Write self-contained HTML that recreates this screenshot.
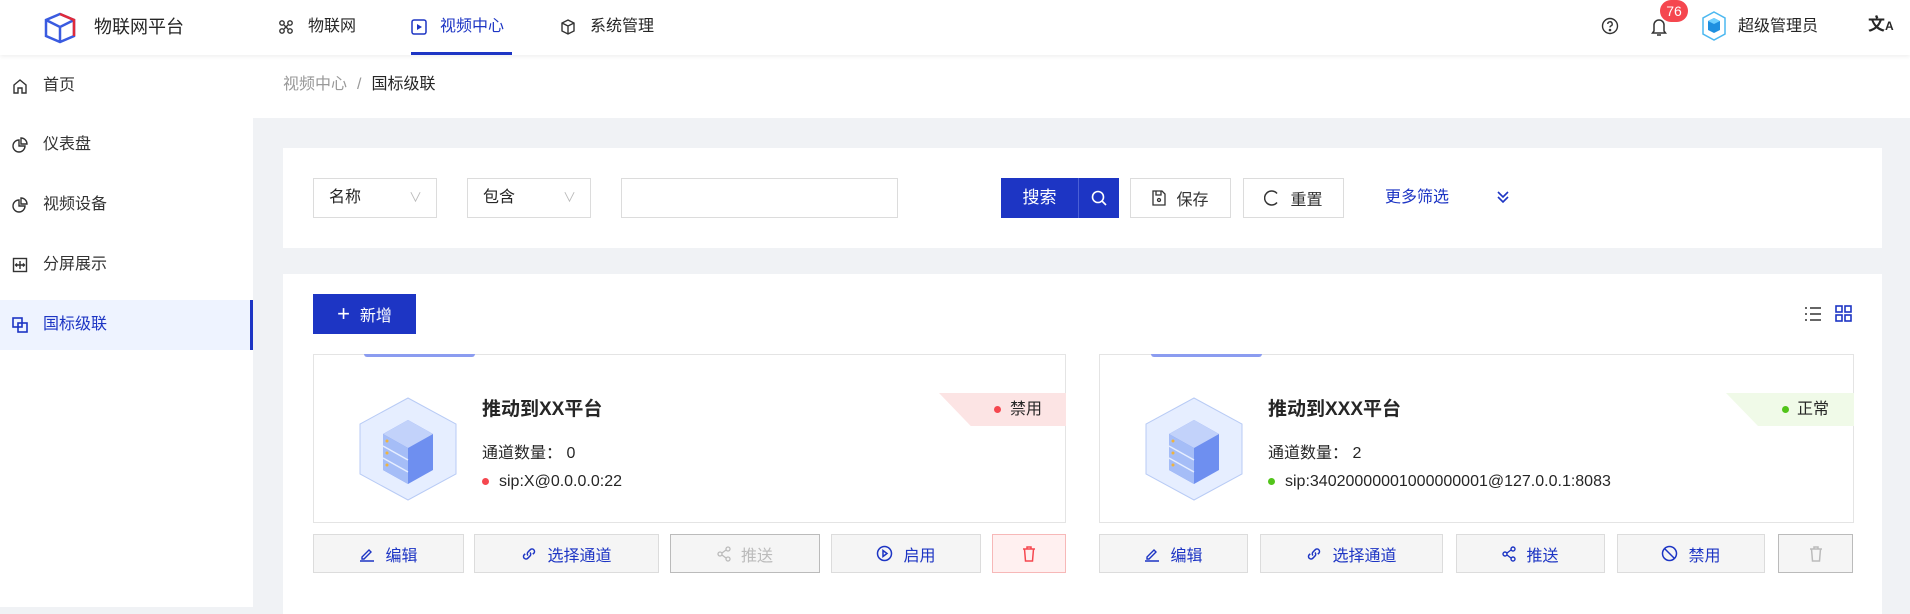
<!DOCTYPE html>
<html><head><meta charset="utf-8"><style>
*{box-sizing:border-box;margin:0;padding:0}
body{width:1910px;height:607px;overflow:hidden;background:#f0f2f5;font-family:"Liberation Sans","Noto Sans CJK SC",sans-serif;color:#262626;font-size:16px;position:relative}
.a{position:absolute}
.hdr{left:0;top:0;width:1910px;height:55px;background:#fff;box-shadow:0 2px 4px rgba(0,0,0,.06);z-index:2}
.side{left:0;top:55px;width:253px;height:552px;background:#fff}
.mi{position:absolute;left:0;width:253px;height:50px;line-height:50px;padding-left:43px;font-size:16px;color:#333}
.mi svg{position:absolute;left:12px;top:17px}
.txt{white-space:nowrap;line-height:1}
.btn{position:absolute;height:39px;border:1px solid #dcdcdc;background:#f5f5f5;display:flex;align-items:center;justify-content:center;gap:10px;color:#1d35c4;font-size:16px}
.sel{position:absolute;height:40px;border:1px solid #dcdcdc;background:#fff;font-size:16px;padding-left:15px;line-height:38px}
.sel span{position:absolute;right:14px;top:0;color:#bbb;font-size:13px}
</style></head><body>
<div class="a hdr">
 <svg class="a" style="left:42px;top:12px" width="36" height="32" viewBox="0 0 36 32"><path d="M18 2 L32 8 L32 24 L18 30 L4 24 L4 8Z M4 8 L18 15 L32 8 M18 15 L18 30" fill="none" stroke="#3a5be0" stroke-width="2.5"/><path d="M18 2 L32 8 L32 24" fill="none" stroke="#e02a3a" stroke-width="2.5"/></svg>
 <div class="a txt" style="left:94px;top:18px;font-size:18px">物联网平台</div>
 <svg class="a" style="left:278px;top:19px" width="16" height="16" viewBox="0 0 16 16" fill="none" stroke="#333" stroke-width="1.4"><circle cx="4" cy="4" r="2.2"/><circle cx="12" cy="4" r="2.2"/><circle cx="4" cy="12" r="2.2"/><circle cx="12" cy="12" r="2.2"/><path d="M6 6l4 4M10 6l-4 4"/></svg>
 <div class="a txt" style="left:308px;top:19px">物联网</div>
 <svg class="a" style="left:411px;top:19px" width="16" height="16" viewBox="0 0 16 16"><rect x="1" y="1" width="14" height="14" rx="2" fill="none" stroke="#1d35c4" stroke-width="1.5"/><path d="M6 5 L11 8 L6 11Z" fill="#1d35c4"/></svg>
 <div class="a txt" style="left:440px;top:19px;color:#1d35c4">视频中心</div>
 <div class="a" style="left:411px;top:52px;width:101px;height:3px;background:#1d35c4"></div>
 <svg class="a" style="left:560px;top:19px" width="16" height="16" viewBox="0 0 16 16" fill="none" stroke="#333" stroke-width="1.4"><path d="M8 1 L14 4 L14 12 L8 15 L2 12 L2 4Z M2 4 L8 7 L14 4 M8 7 V15"/></svg>
 <div class="a txt" style="left:590px;top:19px">系统管理</div>
 <svg class="a" style="left:1601px;top:17px" width="18" height="18" viewBox="0 0 18 18" fill="none" stroke="#333" stroke-width="1.4"><circle cx="9" cy="9" r="7.5"/><path d="M6.8 7a2.2 2.2 0 1 1 3 2c-.6.3-.8.7-.8 1.4"/><circle cx="9" cy="13" r=".6" fill="#333"/></svg>
 <svg class="a" style="left:1650px;top:17px" width="18" height="20" viewBox="0 0 18 20" fill="none" stroke="#333" stroke-width="1.5"><path d="M4 14V8a5 5 0 0 1 10 0v6l1.5 2h-13Z M7 18h4"/></svg>
 <div class="a" style="left:1660px;top:0;width:28px;height:22px;border-radius:11px;background:#f5474f;color:#fff;font-size:14px;text-align:center;line-height:22px">76</div>
 <svg class="a" style="left:1700px;top:10px" width="28" height="32" viewBox="0 0 28 32"><path d="M14 2 L25 8 L25 24 L14 30 L3 24 L3 8Z" fill="none" stroke="#4cb8f0" stroke-width="1.5"/><path d="M14 8 L20 11 L20 20 L14 23 L8 20 L8 11Z" fill="#1e90e0"/><path d="M8 11 L14 14 L20 11 L14 8Z" fill="#6fd0ff"/></svg>
 <div class="a txt" style="left:1738px;top:19px">超级管理员</div>
 <div class="a txt" style="left:1868px;top:16px;font-size:17px;font-weight:bold">文<span style="font-size:12px">A</span></div>
</div>
<div class="a side">
 <div class="mi" style="top:6px"><svg width="16" height="16" viewBox="0 0 16 16" fill="none" stroke="#333" stroke-width="1.4"><path d="M2 7 L8 2 L14 7 V15 H10 V10 H6 V15 H2Z"/></svg>首页</div>
 <div class="mi" style="top:65px"><svg width="16" height="16" viewBox="0 0 16 16" fill="none" stroke="#333" stroke-width="1.4"><path d="M7 3a6 6 0 1 0 6 6H7Z M9 1v6h6a6 6 0 0 0-6-6Z"/></svg>仪表盘</div>
 <div class="mi" style="top:125px"><svg width="16" height="16" viewBox="0 0 16 16" fill="none" stroke="#333" stroke-width="1.4"><path d="M7 3a6 6 0 1 0 6 6H7Z M9 1v6h6a6 6 0 0 0-6-6Z"/></svg>视频设备</div>
 <div class="mi" style="top:185px"><svg width="16" height="16" viewBox="0 0 16 16" fill="none" stroke="#333" stroke-width="1.4"><rect x="1.5" y="1.5" width="13" height="13"/><path d="M8 4v8M3.5 8h9M5 6.5 3.5 8 5 9.5M11 6.5 12.5 8 11 9.5"/></svg>分屏展示</div>
 <div class="mi" style="top:245px;background:#eef3ff;color:#1d35c4;border-right:3px solid #1d35c4"><svg width="16" height="16" viewBox="0 0 16 16" fill="none" stroke="#1d35c4" stroke-width="1.6"><rect x="1" y="1" width="9" height="9"/><rect x="6" y="6" width="9" height="9"/></svg>国标级联</div>
</div>
<div class="a" style="left:253px;top:55px;width:1657px;height:63px;background:#fff"></div>
<div class="a txt" style="left:283px;top:77px"><span style="color:#999">视频中心</span><span style="color:#999;margin:0 10px">/</span>国标级联</div>

<div class="a" style="left:283px;top:148px;width:1599px;height:100px;background:#fff"></div>
<div class="sel" style="left:313px;top:178px;width:124px">名称<span>∨</span></div>
<div class="sel" style="left:467px;top:178px;width:124px">包含<span>∨</span></div>
<div class="sel" style="left:621px;top:178px;width:277px"></div>
<div class="a" style="left:1001px;top:178px;width:118px;height:40px;background:#1d35c4;color:#fff;display:flex;align-items:center"><div style="width:78px;text-align:center;font-size:17px;border-right:1px solid #4a5fd6;line-height:40px">搜索</div><svg style="margin-left:11px" width="18" height="18" viewBox="0 0 18 18" fill="none" stroke="#fff" stroke-width="1.6"><circle cx="8" cy="8" r="5.5"/><path d="M12 12l4 4"/></svg></div>
<div class="btn" style="left:1130px;top:178px;width:101px;height:40px;background:#fff;color:#333"><svg width="14" height="16" viewBox="0 0 14 16" fill="none" stroke="#333" stroke-width="1.3"><path d="M1 1h9l3 3v11H1Z M4 1v4h5V1"/><circle cx="7" cy="10" r="1.5"/></svg>保存</div>
<div class="btn" style="left:1243px;top:178px;width:101px;height:40px;background:#fff;color:#333"><svg width="16" height="18" viewBox="0 0 16 18" fill="none" stroke="#333" stroke-width="1.5"><path d="M13 4.5A7 7 0 1 0 13 13.5"/></svg>重置</div>
<div class="a txt" style="left:1385px;top:190px;color:#1d35c4">更多筛选</div>
<svg class="a" style="left:1496px;top:189px" width="14" height="16" viewBox="0 0 14 16" fill="none" stroke="#1d35c4" stroke-width="1.6"><path d="M2 3l5 5 5-5M2 8l5 5 5-5"/></svg>

<div class="a" style="left:283px;top:274px;width:1599px;height:340px;background:#fff"></div>
<div class="a" style="left:313px;top:294px;width:103px;height:40px;background:#1d35c4;color:#fff;display:flex;align-items:center;justify-content:center;gap:10px;font-size:16px"><span style="font-size:22px;font-weight:300">+</span>新增</div>
<svg class="a" style="left:1804px;top:306px" width="18" height="16" viewBox="0 0 18 16" stroke="#333" stroke-width="1.4"><path d="M1 2h2M6 2h11M1 8h2M6 8h11M1 14h2M6 14h11"/></svg>
<svg class="a" style="left:1835px;top:305px" width="17" height="17" viewBox="0 0 17 17" fill="none" stroke="#1d35c4" stroke-width="1.6"><rect x="1" y="1" width="6" height="6"/><rect x="10" y="1" width="6" height="6"/><rect x="1" y="10" width="6" height="6"/><rect x="10" y="10" width="6" height="6"/></svg>

<!-- card 1 -->
<div class="a" style="left:313px;top:354px;width:753px;height:169px;border:1px solid #e4e4e4;background:#fff"></div>
<div class="a" style="left:364px;top:354px;width:111px;height:3px;background:#8b9cf0;border-radius:0 0 3px 3px"></div>
<svg class="a" style="left:358px;top:396px" width="100" height="106" viewBox="0 0 100 106"><path d="M50 2 L98 28 L98 78 L50 104 L2 78 L2 28Z" fill="#e6eeff" stroke="#b8cbf5"/><path d="M50 24 L75 38 L75 74 L50 88 L25 74 L25 38Z" fill="#6e8ff0"/><path d="M25 38 L50 24 L75 38 L50 52Z" fill="#c2d2fa"/><path d="M25 38 L50 52 L50 88 L25 74Z" fill="#a5bdf7"/><path d="M25 50 L50 64 M25 62 L50 76" stroke="#e6eeff" stroke-width="1.5"/><circle cx="29" cy="45" r="1.5" fill="#f0b43c"/><circle cx="29" cy="57" r="1.5" fill="#f0b43c"/><circle cx="29" cy="69" r="1.5" fill="#f0b43c"/></svg>
<div class="a txt" style="left:482px;top:400px;font-size:19px;font-weight:bold">推动到XX平台</div>
<div class="a txt" style="left:482px;top:446px">通道数量：&nbsp;0</div>
<div class="a" style="left:482px;top:478px;width:7px;height:7px;border-radius:50%;background:#f5474f"></div>
<div class="a txt" style="left:499px;top:474px">sip:X@0.0.0.0:22</div>
<div class="a" style="left:939px;top:393px;width:127px;height:33px;background:#fce4e4;clip-path:polygon(0 0,100% 0,100% 100%,25% 100%)"></div>
<div class="a" style="left:994px;top:406px;width:7px;height:7px;border-radius:50%;background:#f5474f"></div>
<div class="a txt" style="left:1010px;top:402px">禁用</div>
<div class="btn" style="left:313px;top:534px;width:151px"><svg width="16" height="16" viewBox="0 0 16 16" fill="none" stroke="#1d35c4" stroke-width="1.4"><path d="M3 11 L10 4 L12 6 L5 13 H3Z M1 15h14"/></svg>编辑</div>
<div class="btn" style="left:474px;top:534px;width:185px"><svg width="16" height="16" viewBox="0 0 16 16" fill="none" stroke="#1d35c4" stroke-width="1.5"><path d="M7 9.5a2.5 2.5 0 0 1 0-3.5l2.5-2.5a2.5 2.5 0 0 1 3.5 3.5l-1.2 1.2M9 6.5a2.5 2.5 0 0 1 0 3.5l-2.5 2.5a2.5 2.5 0 0 1-3.5-3.5l1.2-1.2"/></svg>选择通道</div>
<div class="btn" style="left:670px;top:534px;width:150px;border-color:#bbb;color:#bbb"><svg width="14" height="16" viewBox="0 0 14 16" fill="none" stroke="#bbb" stroke-width="1.3"><circle cx="3" cy="8" r="2"/><circle cx="11" cy="3" r="2"/><circle cx="11" cy="13" r="2"/><path d="M5 7l4-3M5 9l4 3"/></svg>推送</div>
<div class="btn" style="left:831px;top:534px;width:150px"><svg width="17" height="17" viewBox="0 0 17 17" fill="none" stroke="#1d35c4" stroke-width="1.5"><circle cx="8.5" cy="8.5" r="7"/><path d="M7 5.5l4 3-4 3Z"/></svg>启用</div>
<div class="btn" style="left:992px;top:534px;width:74px;background:#fff0f0;border-color:#f7b8b8"><svg width="14" height="16" viewBox="0 0 14 16" fill="none" stroke="#f5474f" stroke-width="1.5"><path d="M1 3h12M5 3V1h4v2M2.5 3l1 12h7l1-12"/></svg></div>

<!-- card 2 -->
<div class="a" style="left:1099px;top:354px;width:755px;height:169px;border:1px solid #e4e4e4;background:#fff"></div>
<div class="a" style="left:1151px;top:354px;width:111px;height:3px;background:#8b9cf0;border-radius:0 0 3px 3px"></div>
<svg class="a" style="left:1144px;top:396px" width="100" height="106" viewBox="0 0 100 106"><path d="M50 2 L98 28 L98 78 L50 104 L2 78 L2 28Z" fill="#e6eeff" stroke="#b8cbf5"/><path d="M50 24 L75 38 L75 74 L50 88 L25 74 L25 38Z" fill="#6e8ff0"/><path d="M25 38 L50 24 L75 38 L50 52Z" fill="#c2d2fa"/><path d="M25 38 L50 52 L50 88 L25 74Z" fill="#a5bdf7"/><path d="M25 50 L50 64 M25 62 L50 76" stroke="#e6eeff" stroke-width="1.5"/><circle cx="29" cy="45" r="1.5" fill="#f0b43c"/><circle cx="29" cy="57" r="1.5" fill="#f0b43c"/><circle cx="29" cy="69" r="1.5" fill="#f0b43c"/></svg>
<div class="a txt" style="left:1268px;top:400px;font-size:19px;font-weight:bold">推动到XXX平台</div>
<div class="a txt" style="left:1268px;top:446px">通道数量：&nbsp;2</div>
<div class="a" style="left:1268px;top:478px;width:7px;height:7px;border-radius:50%;background:#52c41a"></div>
<div class="a txt" style="left:1285px;top:474px">sip:34020000001000000001@127.0.0.1:8083</div>
<div class="a" style="left:1726px;top:393px;width:128px;height:33px;background:#f0fae8;clip-path:polygon(0 0,100% 0,100% 100%,25% 100%)"></div>
<div class="a" style="left:1782px;top:406px;width:7px;height:7px;border-radius:50%;background:#52c41a"></div>
<div class="a txt" style="left:1797px;top:402px">正常</div>
<div class="btn" style="left:1099px;top:534px;width:149px"><svg width="16" height="16" viewBox="0 0 16 16" fill="none" stroke="#1d35c4" stroke-width="1.4"><path d="M3 11 L10 4 L12 6 L5 13 H3Z M1 15h14"/></svg>编辑</div>
<div class="btn" style="left:1260px;top:534px;width:183px"><svg width="16" height="16" viewBox="0 0 16 16" fill="none" stroke="#1d35c4" stroke-width="1.5"><path d="M7 9.5a2.5 2.5 0 0 1 0-3.5l2.5-2.5a2.5 2.5 0 0 1 3.5 3.5l-1.2 1.2M9 6.5a2.5 2.5 0 0 1 0 3.5l-2.5 2.5a2.5 2.5 0 0 1-3.5-3.5l1.2-1.2"/></svg>选择通道</div>
<div class="btn" style="left:1456px;top:534px;width:149px"><svg width="14" height="16" viewBox="0 0 14 16" fill="none" stroke="#1d35c4" stroke-width="1.4"><circle cx="3" cy="8" r="2"/><circle cx="11" cy="3" r="2"/><circle cx="11" cy="13" r="2"/><path d="M5 7l4-3M5 9l4 3"/></svg>推送</div>
<div class="btn" style="left:1617px;top:534px;width:148px"><svg width="17" height="17" viewBox="0 0 17 17" fill="none" stroke="#1d35c4" stroke-width="1.5"><circle cx="8.5" cy="8.5" r="7"/><path d="M3.5 3.5l10 10"/></svg>禁用</div>
<div class="btn" style="left:1778px;top:534px;width:75px;border-color:#bbb"><svg width="14" height="16" viewBox="0 0 14 16" fill="none" stroke="#bbb" stroke-width="1.5"><path d="M1 3h12M5 3V1h4v2M2.5 3l1 12h7l1-12"/></svg></div>
</body></html>
